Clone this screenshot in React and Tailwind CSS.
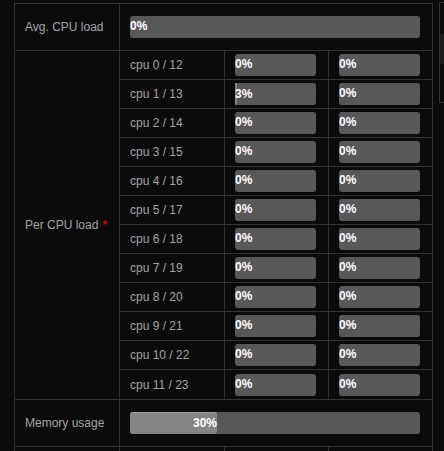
import React from 'react';

const cpus = [
  ['cpu 0 / 12', 0, 0],
  ['cpu 1 / 13', 3, 0],
  ['cpu 2 / 14', 0, 0],
  ['cpu 3 / 15', 0, 0],
  ['cpu 4 / 16', 0, 0],
  ['cpu 5 / 17', 0, 0],
  ['cpu 6 / 18', 0, 0],
  ['cpu 7 / 19', 0, 0],
  ['cpu 8 / 20', 0, 0],
  ['cpu 9 / 21', 0, 0],
  ['cpu 10 / 22', 0, 0],
  ['cpu 11 / 23', 0, 0],
];

const Bar = ({ value }) => (
  <div className="h-[22px] w-full rounded-[3px] bg-[#585858] overflow-visible">
    <div
      className="h-full rounded-[3px] bg-[#858585] border-t border-[#a0a0a0] text-right whitespace-nowrap text-white font-bold text-[12px] leading-[21px]"
      style={{ width: `${value}%`, borderTopWidth: value > 0 ? 1 : 0 }}
    >
      {value}%
    </div>
  </div>
);

export default function App() {
  return (
    <div
      className="relative w-[444px] h-[451px] overflow-hidden bg-[#0b0b0b] text-[12px] text-[#a4a4a4]"
      style={{ fontFamily: '"Liberation Sans", Arial, sans-serif' }}
    >
      <div className="ml-[14px] mt-[3px] w-[419px] border-l border-t border-[#323232]">
        {/* Avg row */}
        <div className="flex h-[47px] border-b border-[#323232]">
          <div className="w-[105px] border-r border-[#323232] pl-[10px] flex items-center">Avg. CPU load</div>
          <div className="flex-1 border-r border-[#323232] pl-[10px] pr-[12px] flex items-center">
            <Bar value={0} />
          </div>
        </div>

        {/* Per CPU */}
        <div className="flex border-b border-[#323232]">
          <div className="w-[105px] shrink-0 border-r border-[#323232] pl-[10px] flex items-center">
            Per CPU load <span className="ml-[4px] text-[#cc0000] font-bold">*</span>
          </div>
          <div className="flex-1 flex flex-col">
            {cpus.map(([name, a, b], i) => (
              <div
                key={name}
                className={`flex h-[29px] ${i < cpus.length - 1 ? 'border-b' : 'h-[28px]'} border-[#323232]`}
              >
                <div className="w-[105px] border-r border-[#323232] pl-[10px] flex items-center">{name}</div>
                <div className="w-[104px] border-r border-[#323232] pl-[10px] pr-[12px] flex items-center">
                  <Bar value={a} />
                </div>
                <div className="w-[104px] border-r border-[#323232] pl-[10px] pr-[12px] flex items-center">
                  <Bar value={b} />
                </div>
              </div>
            ))}
          </div>
        </div>

        {/* Memory row */}
        <div className="flex h-[47px] border-b border-[#323232]">
          <div className="w-[105px] border-r border-[#323232] pl-[10px] flex items-center">Memory usage</div>
          <div className="flex-1 border-r border-[#323232] pl-[10px] pr-[12px] flex items-center">
            <Bar value={30} />
          </div>
        </div>

        {/* Next row (cut off) */}
        <div className="flex h-[20px]">
          <div className="w-[105px] border-r border-[#323232]" />
          <div className="w-[105px] border-r border-[#323232]" />
          <div className="w-[104px] border-r border-[#323232]" />
          <div className="w-[104px] border-r border-[#323232]" />
        </div>
      </div>

      {/* Partially visible side panel */}
      <div className="absolute left-[439px] top-[2px] w-[20px] h-[101px] border-l border-t border-b border-[#323232]">
        <div className="mt-[31px] h-[30px] bg-[#1a1a1a]" />
      </div>
    </div>
  );
}
